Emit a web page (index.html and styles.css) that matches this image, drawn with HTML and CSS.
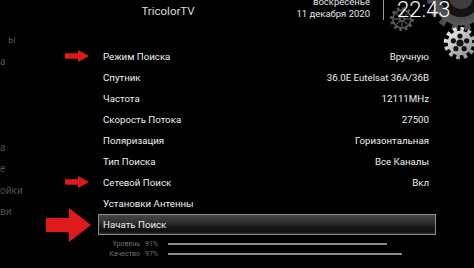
FILE: index.html
```html
<!DOCTYPE html>
<html lang="ru">
<head>
<meta charset="utf-8">
<title>TricolorTV</title>
<link rel="stylesheet" href="styles.css">
</head>
<body>
<div class="screen">
  <svg class="gears" width="94" height="66" viewBox="380 0 94 66" aria-hidden="true">
    <defs>
      <radialGradient id="g1" cx="0.5" cy="0.5" r="0.5">
        <stop offset="0" stop-color="#2e2e2e"/>
        <stop offset="1" stop-color="#585858"/>
      </radialGradient>
      <linearGradient id="g3" x1="0" y1="0" x2="1" y2="1">
        <stop offset="0" stop-color="#f0f0f0"/>
        <stop offset="1" stop-color="#8a8a8a"/>
      </linearGradient>
    </defs>
    <!-- big dark gear -->
    <g transform="translate(461 -3)">
      <circle r="31" fill="none" stroke="#4e4e4e" stroke-width="6" stroke-dasharray="6 6.98"/>
      <circle r="28.5" fill="url(#g1)"/>
      <circle r="20" fill="#141414"/>
      <circle r="12" fill="#3e3e3e"/>
    </g>
    <!-- small gear -->
    <g transform="translate(402 19)">
      <circle r="10.5" fill="none" stroke="#5a5a5a" stroke-width="3" stroke-dasharray="2.6 2.9"/>
      <circle r="9" fill="none" stroke="#5a5a5a" stroke-width="1.6"/>
      <path d="M0 -8 V8 M-8 0 H8 M-5.6 -5.6 L5.6 5.6 M-5.6 5.6 L5.6 -5.6" stroke="#4a4a4a" stroke-width="1.4"/>
      <circle r="3" fill="#5a5a5a"/>
      <circle r="1.4" fill="#000"/>
    </g>
    <!-- bright gear -->
    <g transform="translate(460 43)">
      <circle r="14" fill="none" stroke="url(#g3)" stroke-width="4.5" stroke-dasharray="3.6 3.73"/>
      <circle r="12.3" fill="url(#g3)"/>
      <circle cx="0" cy="-7" r="2.6" fill="#111"/>
      <circle cx="6.66" cy="-2.16" r="2.6" fill="#111"/>
      <circle cx="4.11" cy="5.66" r="2.6" fill="#111"/>
      <circle cx="-4.11" cy="5.66" r="2.6" fill="#111"/>
      <circle cx="-6.66" cy="-2.16" r="2.6" fill="#111"/>
      <circle r="3.6" fill="#111"/>
    </g>
  </svg>

  <aside class="side">
    <div class="side-item side-a">ы</div>
    <div class="side-item">а</div>
    <div class="side-item"></div>
    <div class="side-item"></div>
    <div class="side-item"></div>
    <div class="side-item">а</div>
    <div class="side-item">е</div>
    <div class="side-item">ойки</div>
    <div class="side-item">ви</div>
  </aside>

  <div class="right">
    <header class="header">
      <div class="title">TricolorTV</div>
      <div class="date">
        <div>воскресенье</div>
        <div>11 декабря 2020</div>
      </div>
      <div class="sep"></div>
      <div class="clock">22:43</div>
    </header>

    <main class="menu">
      <div class="row marked">
        <svg class="arrow-small" width="24" height="12" viewBox="0 0 24 12"><polygon points="0,3.2 13,3.2 13,0 24,6 13,12 13,8.8 0,8.8"/></svg>
        <span>Режим Поиска</span><span>Вручную</span>
      </div>
      <div class="row"><span>Спутник</span><span>36.0E Eutelsat 36A/36B</span></div>
      <div class="row"><span>Частота</span><span>12111MHz</span></div>
      <div class="row"><span>Скорость Потока</span><span>27500</span></div>
      <div class="row"><span>Поляризация</span><span>Горизонтальная</span></div>
      <div class="row"><span>Тип Поиска</span><span>Все Каналы</span></div>
      <div class="row marked">
        <svg class="arrow-small" width="24" height="12" viewBox="0 0 24 12"><polygon points="0,3.2 13,3.2 13,0 24,6 13,12 13,8.8 0,8.8"/></svg>
        <span>Сетевой Поиск</span><span>Вкл</span>
      </div>
      <div class="row"><span>Установки Антенны</span><span></span></div>
      <div class="row selected">
        <svg class="arrow-big" width="45" height="34" viewBox="0 0 45 34"><polygon points="0,10 23,10 23,0 45,17 23,34 23,24 0,24"/></svg>
        <span>Начать Поиск</span><span></span>
      </div>

      <div class="signal">
        <div class="sig-row">
          <div class="sig-label"><span>Уровень</span><span>91%</span></div>
          <div class="sig-track"><div class="sig-fill" style="width:91%"></div></div>
        </div>
        <div class="sig-row">
          <div class="sig-label"><span>Качество</span><span>97%</span></div>
          <div class="sig-track"><div class="sig-fill" style="width:97%"></div></div>
        </div>
      </div>
    </main>
  </div>
</div>
</body>
</html>
```

FILE: styles.css
```css
html, body {
  margin: 0;
  padding: 0;
  background: #000;
}

.screen {
  position: relative;
  width: 474px;
  height: 268px;
  overflow: hidden;
  background: #000;
  display: flex;
  font-family: Roboto, "Liberation Sans", sans-serif;
  color: #eeeeee;
}

.gears {
  position: absolute;
  top: 0;
  right: 0;
}

.side {
  width: 24px;
  flex: none;
  padding-top: 29px;
  overflow: hidden;
  font-size: 10px;
  color: #4e4e4e;
}

.side-item {
  height: 21.5px;
  line-height: 21.5px;
  white-space: nowrap;
}

.side-a {
  padding-left: 8px;
}

.right {
  flex: 1;
  display: flex;
  flex-direction: column;
  position: relative;
}

.header {
  height: 46px;
  display: flex;
  align-items: flex-start;
}

.title {
  margin-left: 74px;
  width: 140px;
  text-align: center;
  font-size: 11.5px;
  line-height: 14px;
  padding-top: 4px;
  color: #dcdcdc;
}

.date {
  width: 132px;
  text-align: right;
  font-size: 9.5px;
  line-height: 11.5px;
  margin-top: -4px;
  color: #e6e6e6;
}

.sep {
  width: 1px;
  height: 20px;
  margin: 0 13px;
  background: #9a9a9a;
}

.clock {
  position: relative;
  font-size: 22px;
  font-weight: 300;
  line-height: 22px;
  margin-top: -1px;
  color: #ffffff;
}

.menu {
  margin-left: 74px;
  width: 338px;
  font-size: 9.7px;
}

.row {
  position: relative;
  height: 21px;
  display: flex;
  align-items: center;
  justify-content: space-between;
  padding: 0 7px 0 5px;
  box-sizing: border-box;
  color: #f0f0f0;
}

.row.selected {
  border: 1px solid #8e8e8e;
  padding-left: 4px;
  background: linear-gradient(#464646 0%, #303030 40%, #1a1a1a 60%, #101010 85%, #2a2a2a 100%);
}

.arrow-small {
  position: absolute;
  left: -33px;
  top: 4px;
  fill: #e0191b;
}

.arrow-big {
  position: absolute;
  left: -53px;
  top: -7px;
  fill: #e0191b;
}

.signal {
  margin-top: 4px;
}

.sig-row {
  height: 10px;
  display: flex;
  align-items: center;
}

.sig-label {
  width: 60px;
  display: flex;
  justify-content: flex-end;
  gap: 5px;
  font-size: 7px;
  color: #707070;
}

.sig-track {
  margin-left: 10px;
  width: 241px;
  height: 2px;
}

.sig-fill {
  height: 100%;
  background: #8a8a8a;
}
```
